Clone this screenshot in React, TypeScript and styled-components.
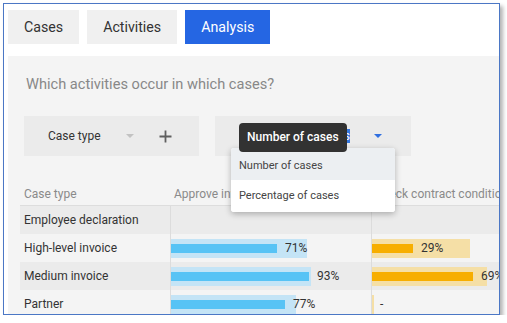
import React from "react";
import styled, { createGlobalStyle } from "styled-components";

const GlobalStyle = createGlobalStyle`
  html, body { margin: 0; padding: 0; background: #ffffff; }
  body { font-family: Roboto, "Noto Sans", Arial, sans-serif; }
  * { box-sizing: border-box; }
`;

const Frame = styled.div`
  margin: 3px 0 0 3px;
  width: 497px;
  height: 312px;
  border: 1px solid #4b77c5;
  box-shadow: 3px 3px 4px rgba(0, 0, 0, 0.3);
  background: #ffffff;
  overflow: hidden;
  display: flex;
  flex-direction: column;
`;

const TabBar = styled.div`
  display: flex;
  gap: 8px;
  padding: 6px 0 0 4px;
`;

const Tab = styled.div<{ $active?: boolean }>`
  height: 34px;
  padding: 0 16px;
  display: flex;
  align-items: center;
  font-size: 14.2px;
  color: ${(p) => (p.$active ? "#ffffff" : "#333333")};
  background: ${(p) => (p.$active ? "#2566e3" : "#f0f0f0")};
`;

const Panel = styled.div`
  margin: 12px 0 0 4px;
  flex: 1;
  background: #f4f4f4;
  padding: 18px 0 0 12px;
  overflow: hidden;
`;

const Question = styled.div`
  font-size: 14.6px;
  line-height: 20px;
  color: #888888;
  padding-left: 6px;
`;

const Filters = styled.div`
  display: flex;
  gap: 16px;
  margin: 22px 0 0 4px;
`;

const FilterBox = styled.div<{ $w: number; $pl: number }>`
  position: relative;
  width: ${(p) => p.$w}px;
  height: 40px;
  background: #ebebeb;
  display: flex;
  align-items: center;
  padding-left: ${(p) => p.$pl}px;
`;

const FilterLabel = styled.span`
  flex: 0 0 78px;
  font-size: 12px;
  color: #333333;
`;

const Caret = styled.span<{ $color: string; $ml: number }>`
  width: 0;
  height: 0;
  margin-left: ${(p) => p.$ml}px;
  border-left: 4px solid transparent;
  border-right: 4px solid transparent;
  border-top: 4px solid ${(p) => p.$color};
`;

const PlusIcon = styled.svg`
  margin-left: 25px;
  width: 13px;
  height: 13px;
`;

const Selected = styled.span`
  width: 105px;
  height: 14px;
  background: #3477e0;
  color: #ffffff;
  font-size: 12px;
  line-height: 14px;
  text-align: right;
  overflow: hidden;
  white-space: nowrap;
`;

const Tooltip = styled.div`
  position: absolute;
  left: 24px;
  top: 7px;
  height: 29px;
  padding: 0 8px;
  border-radius: 4px;
  background: #323232;
  color: #ffffff;
  font-size: 12px;
  font-weight: 500;
  line-height: 29px;
  white-space: nowrap;
  z-index: 3;
`;

const Menu = styled.div`
  position: absolute;
  left: 16px;
  top: 32px;
  width: 164px;
  background: #ffffff;
  border-radius: 3px;
  box-shadow: 0 2px 6px rgba(0, 0, 0, 0.28);
  z-index: 2;
  overflow: hidden;
`;

const MenuItem = styled.div<{ $hover?: boolean; $shift: number }>`
  height: 32px;
  padding: ${(p) => (p.$shift > 0 ? `${p.$shift}px 0 0 8px` : `0 0 ${-p.$shift}px 8px`)};
  display: flex;
  align-items: center;
  font-size: 11px;
  color: #444444;
  background: ${(p) => (p.$hover ? "#eceff2" : "#ffffff")};
`;

const Table = styled.div`
  margin-top: 24px;
`;

const HeaderRow = styled.div`
  display: grid;
  grid-template-columns: 150px 201px 1fr;
  height: 26px;
  border-bottom: 1px solid #dddddd;
  align-items: end;
  padding-bottom: 3px;
`;

const HeadCell = styled.div`
  font-size: 12px;
  line-height: 16px;
  color: #8a8a8a;
  padding-left: 4px;
  white-space: nowrap;
  overflow: hidden;
`;

const Row = styled.div<{ $shade?: boolean }>`
  display: grid;
  grid-template-columns: 150px 201px 1fr;
  height: 28px;
  background: ${(p) => (p.$shade ? "#ebebeb" : "#f4f4f4")};
`;

const NameCell = styled.div`
  display: flex;
  align-items: center;
  padding-left: 4px;
  font-size: 12px;
  color: #333333;
  white-space: nowrap;
`;

const BarCell = styled.div`
  display: flex;
  align-items: center;
  border-left: 1px solid #dcdcdc;
  min-width: 0;
`;

const Track = styled.div<{ $bg: string }>`
  height: 19px;
  background: ${(p) => p.$bg};
  display: flex;
  align-items: center;
  flex: none;
`;

const Fill = styled.div<{ $bg: string }>`
  height: 9px;
  background: ${(p) => p.$bg};
  flex: none;
`;

const Pct = styled.span`
  margin-left: 8px;
  font-size: 12px;
  color: #333333;
  white-space: nowrap;
`;

type Bar = { track: number; fill: number; label: string } | null;

const BLUE = { track: "#c4e4f6", fill: "#57c3f5" };
const ORANGE = { track: "#f5dfa6", fill: "#f7ae00" };

const rows: { name: string; a: Bar; b: Bar }[] = [
  { name: "Employee declaration", a: null, b: null },
  {
    name: "High-level invoice",
    a: { track: 136, fill: 106, label: "71%" },
    b: { track: 98, fill: 41, label: "29%" },
  },
  {
    name: "Medium invoice",
    a: { track: 140, fill: 138, label: "93%" },
    b: { track: 115, fill: 101, label: "69%" },
  },
  {
    name: "Partner",
    a: { track: 125, fill: 114, label: "77%" },
    b: { track: 2, fill: 0, label: "-" },
  },
];

function BarView({ bar, colors }: { bar: Bar; colors: { track: string; fill: string } }) {
  if (!bar) return <BarCell />;
  return (
    <BarCell>
      <Track $bg={colors.track} style={{ width: bar.track }}>
        <Fill $bg={colors.fill} style={{ width: bar.fill }} />
        <Pct>{bar.label}</Pct>
      </Track>
    </BarCell>
  );
}

export default function App() {
  return (
    <>
      <GlobalStyle />
      <Frame>
        <TabBar>
          <Tab>Cases</Tab>
          <Tab>Activities</Tab>
          <Tab $active>Analysis</Tab>
        </TabBar>
        <Panel>
          <Question>Which activities occur in which cases?</Question>
          <Filters>
            <FilterBox $w={175} $pl={24}>
              <FilterLabel>Case type</FilterLabel>
              <Caret $color="#c2c2c2" $ml={0} />
              <PlusIcon viewBox="0 0 13 13">
                <path d="M6.5 0.5v12M0.5 6.5h12" stroke="#5f5f5f" strokeWidth="1.8" fill="none" />
              </PlusIcon>
            </FilterBox>
            <FilterBox $w={196} $pl={30}>
              <Selected>Number of cases</Selected>
              <Caret $color="#2f6fe0" $ml={24} />
              <Tooltip>Number of cases</Tooltip>
              <Menu>
                <MenuItem $hover $shift={3}>Number of cases</MenuItem>
                <MenuItem $shift={-2}>Percentage of cases</MenuItem>
              </Menu>
            </FilterBox>
          </Filters>
          <Table>
            <HeaderRow>
              <HeadCell>Case type</HeadCell>
              <HeadCell>Approve invoice</HeadCell>
              <HeadCell>Check contract conditions</HeadCell>
            </HeaderRow>
            {rows.map((r, i) => (
              <Row key={r.name} $shade={i % 2 === 0}>
                <NameCell>{r.name}</NameCell>
                <BarView bar={r.a} colors={BLUE} />
                <BarView bar={r.b} colors={ORANGE} />
              </Row>
            ))}
          </Table>
        </Panel>
      </Frame>
    </>
  );
}
